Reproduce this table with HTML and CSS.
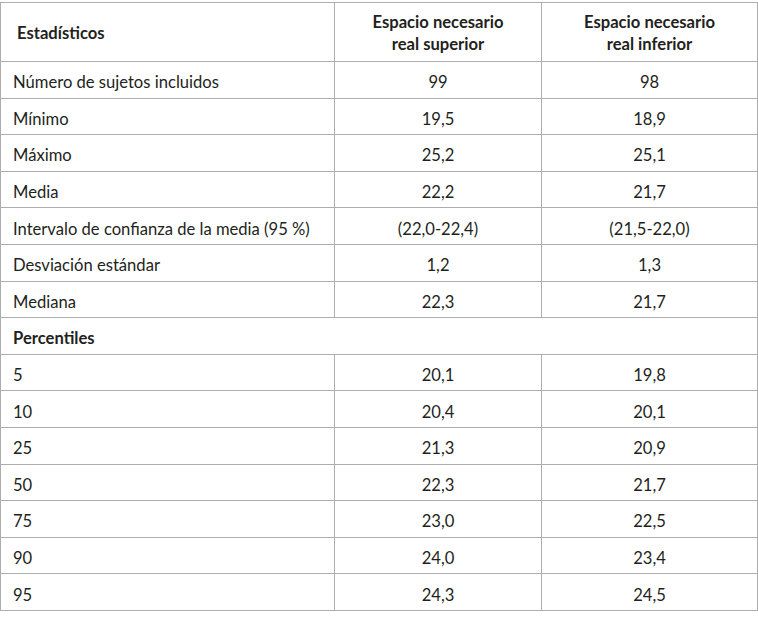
FILE: index.html
```html
<!DOCTYPE html>
<html lang="es">
<head>
<meta charset="utf-8">
<link rel="stylesheet" href="styles.css">
</head>
<body>
<table class="stats">
  <colgroup>
    <col class="c1">
    <col class="c2">
    <col class="c3">
  </colgroup>
  <thead>
    <tr class="head">
      <th class="label first">Estadísticos</th>
      <th class="num">Espacio necesario<br>real superior</th>
      <th class="num">Espacio necesario<br>real inferior</th>
    </tr>
  </thead>
  <tbody>
    <tr><td class="label">Número de sujetos incluidos</td><td class="num">99</td><td class="num">98</td></tr>
    <tr><td class="label">Mínimo</td><td class="num">19,5</td><td class="num">18,9</td></tr>
    <tr><td class="label">Máximo</td><td class="num">25,2</td><td class="num">25,1</td></tr>
    <tr><td class="label">Media</td><td class="num">22,2</td><td class="num">21,7</td></tr>
    <tr><td class="label">Intervalo de confianza de la media (95 %)</td><td class="num">(22,0-22,4)</td><td class="num">(21,5-22,0)</td></tr>
    <tr><td class="label">Desviación estándar</td><td class="num">1,2</td><td class="num">1,3</td></tr>
    <tr><td class="label">Mediana</td><td class="num">22,3</td><td class="num">21,7</td></tr>
    <tr><td class="label section" colspan="3">Percentiles</td></tr>
    <tr><td class="label">5</td><td class="num">20,1</td><td class="num">19,8</td></tr>
    <tr><td class="label">10</td><td class="num">20,4</td><td class="num">20,1</td></tr>
    <tr><td class="label">25</td><td class="num">21,3</td><td class="num">20,9</td></tr>
    <tr><td class="label">50</td><td class="num">22,3</td><td class="num">21,7</td></tr>
    <tr><td class="label">75</td><td class="num">23,0</td><td class="num">22,5</td></tr>
    <tr><td class="label">90</td><td class="num">24,0</td><td class="num">23,4</td></tr>
    <tr><td class="label">95</td><td class="num">24,3</td><td class="num">24,5</td></tr>
  </tbody>
</table>
</body>
</html>
```
FILE: styles.css
```css
html, body {
  margin: 0;
  padding: 0;
  background: #ffffff;
}
body {
  padding-top: 2px;
  font-family: "Lato", "Liberation Sans", sans-serif;
  color: #231f20;
}
.stats {
  border-collapse: collapse;
  width: 757px;
  table-layout: fixed;
  font-size: 16.6px;
}
.c1 { width: 334px; }
.c2 { width: 207px; }
.c3 { width: 216px; }
.stats th, .stats td {
  box-sizing: border-box;
  border: 1px solid #adadad;
  padding: 5px 0 0 0;
  line-height: 22px;
  vertical-align: middle;
  overflow: hidden;
  white-space: nowrap;
}
.head th { height: 59px; font-weight: 700; padding-top: 2px; }
.stats tbody tr { height: 36.6px; }
.label { text-align: left; padding-left: 12px !important; }
.first { padding-left: 16px !important; }
.num { text-align: center; }
.section { font-weight: 700; }
```
